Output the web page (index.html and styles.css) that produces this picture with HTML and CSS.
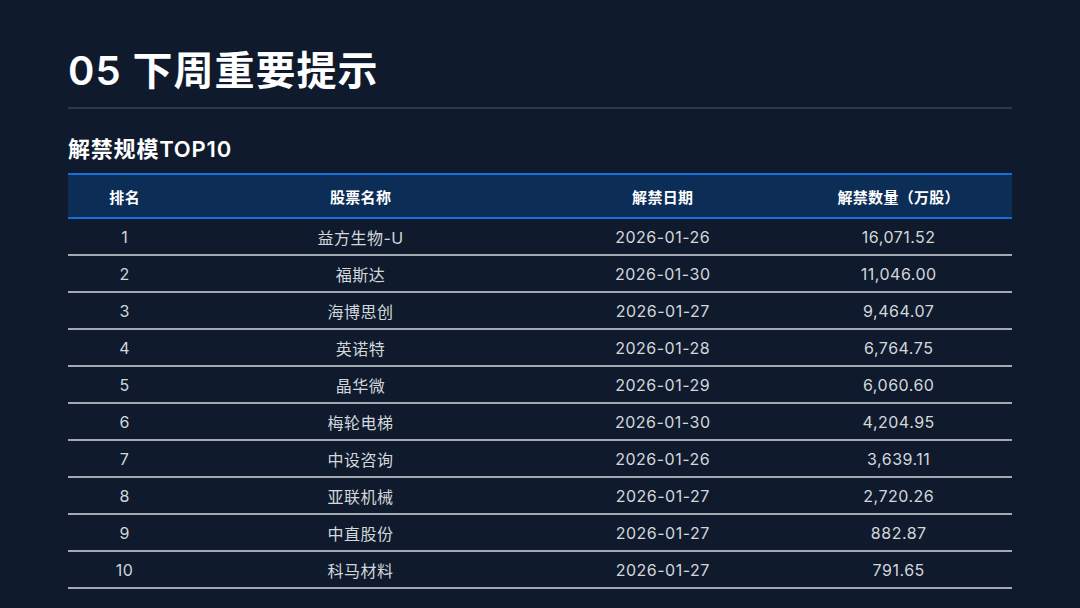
FILE: index.html
```html
<!DOCTYPE html>
<html lang="zh-CN">
<head>
<meta charset="utf-8">
<link rel="stylesheet" href="styles.css">
</head>
<body>
<main class="slide">
  <h1 class="title">05 下周重要提示</h1>
  <h2 class="subtitle">解禁规模TOP10</h2>
  <table class="grid">
    <colgroup>
      <col class="c1"><col class="c2"><col class="c3"><col class="c4">
    </colgroup>
    <thead>
      <tr><th>排名</th><th>股票名称</th><th>解禁日期</th><th>解禁数量（万股）</th></tr>
    </thead>
    <tbody>
      <tr><td>1</td><td>益方生物-U</td><td>2026-01-26</td><td>16,071.52</td></tr>
      <tr><td>2</td><td>福斯达</td><td>2026-01-30</td><td>11,046.00</td></tr>
      <tr><td>3</td><td>海博思创</td><td>2026-01-27</td><td>9,464.07</td></tr>
      <tr><td>4</td><td>英诺特</td><td>2026-01-28</td><td>6,764.75</td></tr>
      <tr><td>5</td><td>晶华微</td><td>2026-01-29</td><td>6,060.60</td></tr>
      <tr><td>6</td><td>梅轮电梯</td><td>2026-01-30</td><td>4,204.95</td></tr>
      <tr><td>7</td><td>中设咨询</td><td>2026-01-26</td><td>3,639.11</td></tr>
      <tr><td>8</td><td>亚联机械</td><td>2026-01-27</td><td>2,720.26</td></tr>
      <tr><td>9</td><td>中直股份</td><td>2026-01-27</td><td>882.87</td></tr>
      <tr><td>10</td><td>科马材料</td><td>2026-01-27</td><td>791.65</td></tr>
    </tbody>
  </table>
</main>
</body>
</html>
```

FILE: styles.css
```css
html, body {
  margin: 0;
  padding: 0;
  background: #0f1b2c;
}
body {
  width: 1080px;
  height: 608px;
  overflow: hidden;
  font-family: Inter, "Noto Sans CJK SC", sans-serif;
  color: #d3d7dd;
}
.slide {
  padding: 46px 68px 0 68px;
}
.title {
  margin: 0;
  font-size: 40px;
  line-height: 50px;
  font-weight: 600;
  letter-spacing: 1px;
  color: #ffffff;
  padding-bottom: 11px;
  border-bottom: 2px solid #2a384b;
}
.subtitle {
  margin: 25px 0 9px 0;
  font-size: 22px;
  line-height: 30px;
  font-weight: 600;
  letter-spacing: 0.8px;
  color: #ffffff;
}
.grid {
  width: 100%;
  border-collapse: collapse;
  table-layout: fixed;
}
.c1 { width: 12%; }
.c2 { width: 38%; }
.c3 { width: 26%; }
.c4 { width: 24%; }
.grid th {
  height: 42px;
  padding: 0;
  background: #0b2d56;
  border-top: 2px solid #1a6fe0;
  border-bottom: 2px solid #1a6fe0;
  color: #ffffff;
  font-size: 15px;
  font-weight: 700;
  letter-spacing: 0.3px;
  text-align: center;
}
.grid td {
  height: 35px;
  padding: 0;
  border-bottom: 2px solid #a3a9b0;
  font-size: 16px;
  letter-spacing: 0.5px;
  text-align: center;
  color: #d3d7dd;
}
```
